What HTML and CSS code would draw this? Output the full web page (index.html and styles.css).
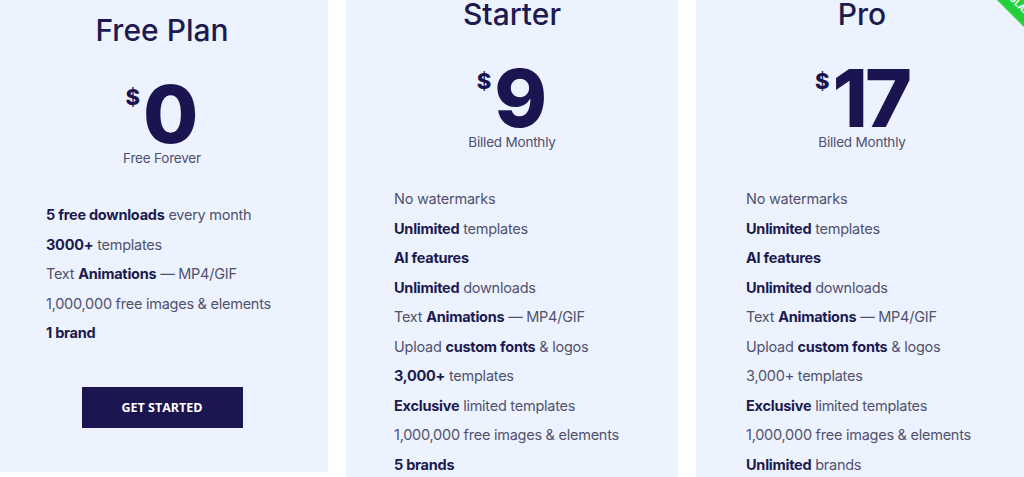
FILE: index.html
```html
<!DOCTYPE html>
<html lang="en">
<head>
<meta charset="utf-8">
<title>Pricing</title>
<link rel="stylesheet" href="styles.css">
</head>
<body>
<div class="plans">
  <section class="card card-free">
    <h2 class="title">Free Plan</h2>
    <div class="price"><span class="cur">$</span><span class="amount">0</span></div>
    <p class="note">Free Forever</p>
    <ul class="features">
      <li><b>5 free downloads</b> every month</li>
      <li><b>3000+</b> templates</li>
      <li>Text <b>Animations</b> — MP4/GIF</li>
      <li>1,000,000 free images &amp; elements</li>
      <li><b>1 brand</b></li>
    </ul>
    <a class="btn" href="#">GET STARTED</a>
  </section>
  <section class="card card-paid card-starter">
    <h2 class="title">Starter</h2>
    <div class="price"><span class="cur">$</span><span class="amount">9</span></div>
    <p class="note">Billed Monthly</p>
    <ul class="features">
      <li>No watermarks</li>
      <li><b>Unlimited</b> templates</li>
      <li><b>AI features</b></li>
      <li><b>Unlimited</b> downloads</li>
      <li>Text <b>Animations</b> — MP4/GIF</li>
      <li>Upload <b>custom fonts</b> &amp; logos</li>
      <li><b>3,000+</b> templates</li>
      <li><b>Exclusive</b> limited templates</li>
      <li>1,000,000 free images &amp; elements</li>
      <li><b>5 brands</b></li>
    </ul>
  </section>
  <section class="card card-paid card-pro">
    <div class="ribbon">POPULAR</div>
    <h2 class="title">Pro</h2>
    <div class="price"><span class="cur">$</span><span class="amount amount-tight">17</span></div>
    <p class="note">Billed Monthly</p>
    <ul class="features">
      <li>No watermarks</li>
      <li><b>Unlimited</b> templates</li>
      <li><b>AI features</b></li>
      <li><b>Unlimited</b> downloads</li>
      <li>Text <b>Animations</b> — MP4/GIF</li>
      <li>Upload <b>custom fonts</b> &amp; logos</li>
      <li>3,000+ templates</li>
      <li><b>Exclusive</b> limited templates</li>
      <li>1,000,000 free images &amp; elements</li>
      <li><b>Unlimited</b> brands</li>
    </ul>
  </section>
</div>
</body>
</html>
```

FILE: styles.css
```css
html, body {
  margin: 0;
  padding: 0;
  background: #ffffff;
  overflow: hidden;
  height: 477px;
}

body {
  font-family: Inter, "Noto Sans", sans-serif;
  color: #51516f;
}

.plans {
  display: flex;
  align-items: flex-start;
  gap: 18px;
  margin-left: -4px;
}

.card {
  position: relative;
  flex: 0 0 332px;
  width: 332px;
  box-sizing: border-box;
  background: #ecf3fe;
  padding: 12px 0 44px;
  overflow: hidden;
}

.card-paid {
  margin-top: -16px;
  padding-bottom: 80px;
}

.title {
  margin: 0;
  font-size: 30px;
  line-height: 36px;
  font-weight: 500;
  text-align: center;
  color: #1c1a4e;
}

.price {
  display: flex;
  justify-content: center;
  align-items: flex-start;
  margin-top: 32px;
  color: #1a1550;
}

.cur {
  font-size: 22px;
  line-height: 22px;
  font-weight: 800;
  margin-top: 6px;
  margin-right: 3px;
}

.amount {
  font-size: 80px;
  line-height: 68px;
  font-weight: 800;
}

.amount-tight {
  letter-spacing: -3px;
}

.note {
  margin: 0;
  font-size: 13.5px;
  line-height: 20px;
  letter-spacing: -0.2px;
  text-align: center;
  color: #4f4f6e;
}

.features {
  list-style: none;
  margin: 32px 0 0;
  padding: 0 0 0 50px;
  font-size: 14.5px;
  line-height: 29.5px;
  letter-spacing: -0.25px;
}

.card-starter .features {
  padding-left: 48px;
}

.features b {
  font-weight: 700;
  color: #1c1a4e;
}

.btn {
  display: flex;
  align-items: center;
  justify-content: center;
  width: 161px;
  height: 41px;
  margin: 39px auto 0;
  background: #1b1550;
  color: #ffffff;
  font-family: "Open Sans", "Liberation Sans", sans-serif;
  font-weight: 700;
  font-size: 12.5px;
  text-decoration: none;
}

.ribbon {
  position: absolute;
  top: 3px;
  right: -45px;
  width: 120px;
  height: 24px;
  transform: rotate(45deg);
  background: #22d13a;
  color: #ffffff;
  font-size: 9px;
  font-weight: 700;
  line-height: 24px;
  text-align: center;
}
```
